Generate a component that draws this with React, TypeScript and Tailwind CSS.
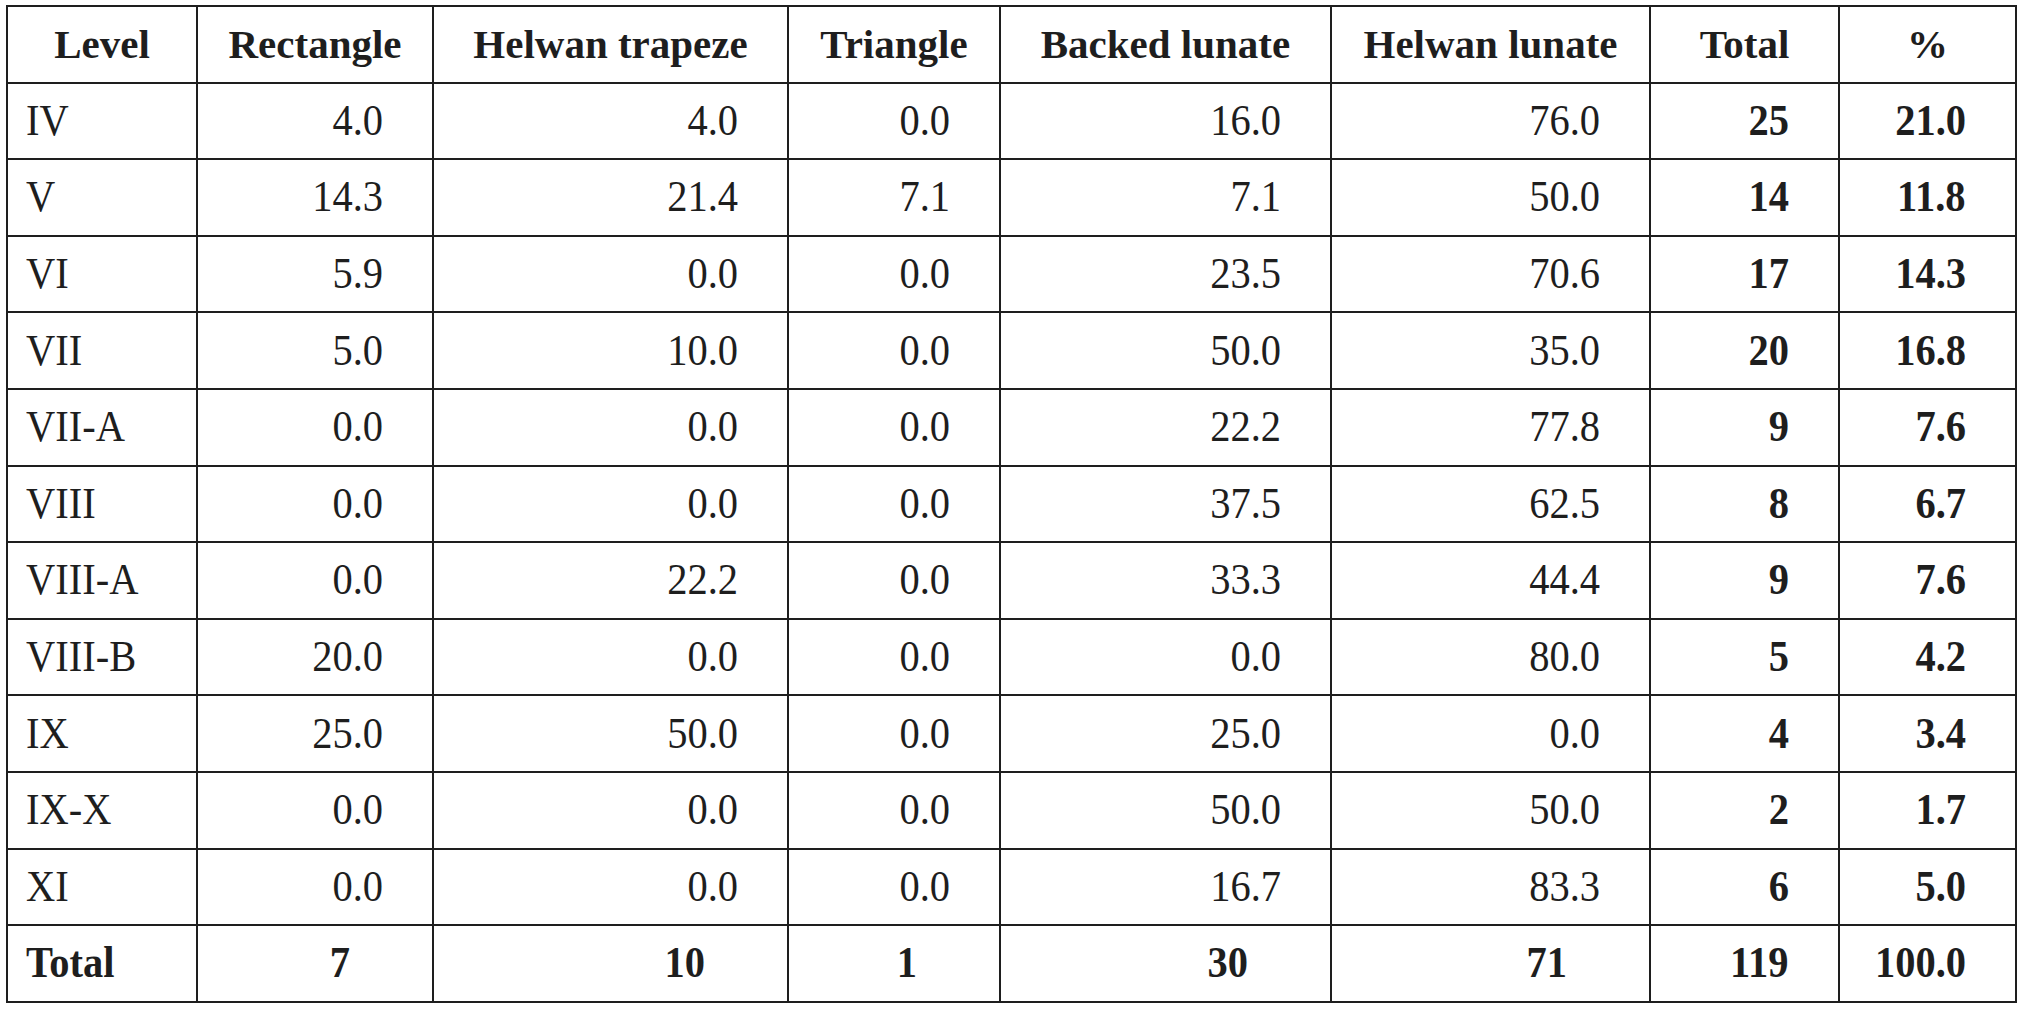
const headers = ['Level', 'Rectangle', 'Helwan trapeze', 'Triangle', 'Backed lunate', 'Helwan lunate', 'Total', '%']

const widths = ['w-[190px]', 'w-[236px]', 'w-[355px]', 'w-[212px]', 'w-[331px]', 'w-[319px]', 'w-[189px]', 'w-[177px]']

const rows: string[][] = [
  ['IV', '4.0', '4.0', '0.0', '16.0', '76.0', '25', '21.0'],
  ['V', '14.3', '21.4', '7.1', '7.1', '50.0', '14', '11.8'],
  ['VI', '5.9', '0.0', '0.0', '23.5', '70.6', '17', '14.3'],
  ['VII', '5.0', '10.0', '0.0', '50.0', '35.0', '20', '16.8'],
  ['VII-A', '0.0', '0.0', '0.0', '22.2', '77.8', '9', '7.6'],
  ['VIII', '0.0', '0.0', '0.0', '37.5', '62.5', '8', '6.7'],
  ['VIII-A', '0.0', '22.2', '0.0', '33.3', '44.4', '9', '7.6'],
  ['VIII-B', '20.0', '0.0', '0.0', '0.0', '80.0', '5', '4.2'],
  ['IX', '25.0', '50.0', '0.0', '25.0', '0.0', '4', '3.4'],
  ['IX-X', '0.0', '0.0', '0.0', '50.0', '50.0', '2', '1.7'],
  ['XI', '0.0', '0.0', '0.0', '16.7', '83.3', '6', '5.0'],
]

const totals = ['Total', '7', '10', '1', '30', '71', '119', '100.0']

const cell = 'border-2 border-[#1e1e1e] h-[76.6px] p-0 align-middle'

// the figures are set in a slightly narrowed Times face
function Fig({ children, left }: { children: React.ReactNode; left?: boolean }) {
  return (
    <span className={`inline-block scale-x-[0.92] ${left ? 'origin-left' : 'origin-right'}`}>{children}</span>
  )
}

export default function App() {
  return (
    <div
      className="w-[2038px] h-[1015px] bg-white pt-[5px] pl-[6px] text-[#1e1e1e]"
      style={{ fontFamily: '"Liberation Serif", "Times New Roman", serif' }}
    >
      <table className="border-collapse table-fixed w-[2009px]">
        <thead>
          <tr>
            {headers.map((h, i) => (
              <th key={h} className={`${cell} ${widths[i]} h-[75px] text-center font-bold text-[41px] leading-none`}>
                {h}
              </th>
            ))}
          </tr>
        </thead>
        <tbody>
          {rows.map((r) => (
            <tr key={r[0]}>
              {r.map((v, i) => (
                <td
                  key={i}
                  className={`${cell} text-[44px] leading-none ${
                    i === 0 ? 'text-left pl-[18px]' : 'text-right pr-[49px]'
                  } ${i >= 6 ? 'font-bold' : 'font-normal'}`}
                >
                  <Fig left={i === 0}>{v}</Fig>
                </td>
              ))}
            </tr>
          ))}
          <tr>
            {totals.map((v, i) => (
              <td
                key={i}
                className={`${cell} font-bold text-[44px] leading-none ${
                  i === 0 ? 'text-left pl-[18px]' : i >= 6 ? 'text-right pr-[49px]' : 'text-right pr-[82px]'
                }`}
              >
                <Fig left={i === 0}>{v}</Fig>
              </td>
            ))}
          </tr>
        </tbody>
      </table>
    </div>
  )
}
